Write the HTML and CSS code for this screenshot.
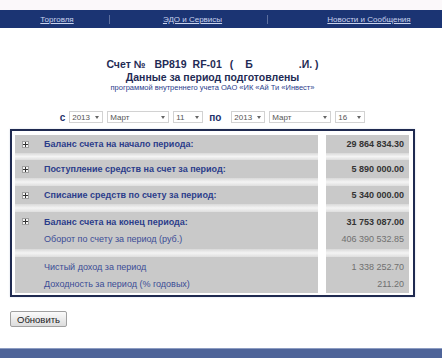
FILE: index.html
```html
<!DOCTYPE html>
<html lang="ru">
<head>
    <meta charset="UTF-8">
    <meta name="viewport" content="width=device-width, initial-scale=1.0">
    <title>Данные за период</title>
    <link rel="stylesheet" href="styles.css">
</head>
<body>
<div class="topline"></div>
<div class="navbar">
    <div class="nav-item nav-trade"><a href="#">Торговля</a></div>
    <span class="nav-sep"></span>
    <div class="nav-item nav-edo"><a href="#">ЭДО и Сервисы</a></div>
    <span class="nav-sep"></span>
    <div class="nav-item nav-news"><a href="#">Новости и Сообщения</a></div>
</div>
<div class="content">
    <div class="heading">
        <div class="title"><span>Счет №</span><span class="acc">BP819</span><span class="acc2">RF-01</span><span class="paren">(</span><span class="name">Б</span><span class="init">.И. )</span></div>
        <div class="subtitle">Данные за период подготовлены</div>
        <div class="note">программой внутреннего учета ОАО «ИК «Ай Ти «Инвест»</div>
    </div>
    <div class="period">
        <span class="period-word">с</span>
        <span class="select sel-year">2013<i class="arrow"></i></span>
        <span class="select sel-month">Март<i class="arrow"></i></span>
        <span class="select sel-day">11<i class="arrow"></i></span>
        <span class="period-word word-to">по</span>
        <span class="select sel-year">2013<i class="arrow"></i></span>
        <span class="select sel-month">Март<i class="arrow"></i></span>
        <span class="select sel-day">16<i class="arrow"></i></span>
    </div>
    <div class="report">
        <div class="row">
            <div class="cell label"><span class="plus"></span>Баланс счета на начало периода:</div>
            <div class="cell value">29 864 834.30</div>
        </div>
        <div class="row spacer first"><div class="cell"></div><div class="cell value"></div></div>
        <div class="row">
            <div class="cell label"><span class="plus"></span>Поступление средств на счет за период:</div>
            <div class="cell value">5 890 000.00</div>
        </div>
        <div class="row spacer"><div class="cell"></div><div class="cell value"></div></div>
        <div class="row">
            <div class="cell label"><span class="plus"></span>Списание средств по счету за период:</div>
            <div class="cell value">5 340 000.00</div>
        </div>
        <div class="row spacer"><div class="cell"></div><div class="cell value"></div></div>
        <div class="row multi">
            <div class="cell label">
                <div class="line"><span class="plus"></span>Баланс счета на конец периода:</div>
                <div class="line sub">Оборот по счету за период (руб.)</div>
            </div>
            <div class="cell value">
                <div class="line">31 753 087.00</div>
                <div class="line sub">406 390 532.85</div>
            </div>
        </div>
        <div class="row spacer"><div class="cell"></div><div class="cell value"></div></div>
        <div class="row multi last">
            <div class="cell label">
                <div class="line sub">Чистый доход за период</div>
                <div class="line sub">Доходность за период (% годовых)</div>
            </div>
            <div class="cell value">
                <div class="line sub">1 338 252.70</div>
                <div class="line sub">211.20</div>
            </div>
        </div>
    </div>
    <button class="refresh">Обновить</button>
</div>
<div class="footer"></div>
</body>
</html>
```

FILE: styles.css
```css
body {
    font-family: "Liberation Sans", Arial, sans-serif;
    margin: 0;
    padding: 0;
    background-color: white;
    height: 358px;
    overflow: hidden;
}

.topline {
    height: 10px;
    background-color: #fbf8fa;
}

.navbar {
    display: flex;
    align-items: center;
    height: 18px;
    background-color: #1b3473;
    font-size: 8px;
}

.nav-item {
    text-align: center;
}

.nav-item a {
    color: #c9d3ee;
    text-decoration: underline;
}

.nav-trade {
    width: 109px;
    padding-left: 5px;
    box-sizing: border-box;
}

.nav-edo {
    width: 157px;
    padding-left: 8px;
    box-sizing: border-box;
}

.nav-news {
    flex: 1;
    padding-left: 28px;
}

.nav-sep {
    width: 1px;
    height: 9px;
    background-color: #5d6f9f;
}

.content {
    padding: 30px 0 0 10px;
    width: 405px;
}

.heading {
    text-align: center;
    color: #1f2b55;
    font-weight: bold;
}

.title {
    font-size: 10.5px;
    line-height: 13px;
    white-space: nowrap;
}

.title .acc {
    margin-left: 9px;
}

.title .acc2 {
    margin-left: 6px;
}

.title .paren {
    margin-left: 8px;
}

.title .name {
    margin-left: 12px;
}

.title .init {
    margin-left: 46px;
}

.subtitle {
    font-size: 10.5px;
    line-height: 12px;
}

.note {
    font-size: 7.5px;
    line-height: 10px;
    font-weight: normal;
    color: #2a3c8c;
}

.period {
    display: flex;
    justify-content: center;
    align-items: center;
    gap: 4px;
    margin-top: 18px;
    height: 12px;
}

.period-word {
    font-size: 10px;
    font-weight: bold;
    color: #22306a;
}

.word-to {
    margin: 0 6px 0 2px;
}

.select {
    display: flex;
    align-items: center;
    justify-content: space-between;
    box-sizing: border-box;
    height: 12px;
    padding: 0 3px 0 2px;
    border: 1px solid #d2d2d2;
    background-color: white;
    color: #555;
    font-size: 8px;
}

.sel-year {
    width: 34px;
}

.sel-month {
    width: 62px;
}

.sel-day {
    width: 30px;
}

.arrow {
    width: 0;
    height: 0;
    border-left: 2.5px solid transparent;
    border-right: 2.5px solid transparent;
    border-top: 3px solid #666;
}

.report {
    margin-top: 6px;
    border: 2px solid #1f2a50;
    padding: 4px 4px 2px 3px;
    box-shadow: 0 0 2px #d6dbe6;
}

.row {
    display: flex;
    gap: 8px;
    height: 18px;
}

.row.spacer {
    height: 8px;
}

.row.spacer.first {
    height: 7px;
}

.row.multi {
    height: 37px;
}

.row.multi.last {
    height: 36px;
}

.cell {
    flex: 1;
    display: flex;
    align-items: center;
    background-color: #c9c9c9;
    font-size: 9px;
    font-weight: bold;
    color: #2c3d8b;
}

.cell.value {
    flex: none;
    width: 83px;
    justify-content: flex-end;
    padding-right: 5px;
    box-sizing: border-box;
    color: #333;
}

.spacer .cell {
    background: linear-gradient(#d9d9d9, #f4f4f4 50%, #dedede);
}

.multi .cell {
    flex-direction: column;
    align-items: stretch;
    justify-content: flex-start;
    padding-top: 1px;
}

.multi .cell.value {
    text-align: right;
}

.line {
    display: flex;
    align-items: center;
    height: 17px;
}

.value .line {
    justify-content: flex-end;
}

.line.sub {
    font-weight: normal;
    color: #3b4c96;
    padding-left: 29px;
}

.value .line.sub {
    color: #707070;
    padding-left: 0;
}

.plus {
    position: relative;
    width: 5px;
    height: 5px;
    margin: 0 15px 0 7px;
    border: 1px solid #a0a0a0;
    background-color: #f4f4f4;
}

.plus::before,
.plus::after {
    content: "";
    position: absolute;
    background-color: #333;
}

.plus::before {
    left: 0;
    top: 2px;
    width: 5px;
    height: 1px;
}

.plus::after {
    left: 2px;
    top: 0;
    width: 1px;
    height: 5px;
}

.refresh {
    display: block;
    margin-top: 14px;
    height: 16px;
    padding: 0 6px;
    font-family: "Liberation Sans", Arial, sans-serif;
    font-size: 9.5px;
    color: #222;
    border: 1px solid #a0a0a0;
    border-radius: 2px;
    background: linear-gradient(#fbfbfb, #dcdcdc);
}

.footer {
    margin-top: 21px;
    height: 10px;
    background-color: #4e6499;
    border-top: 1px solid #8c9cc2;
}
```
